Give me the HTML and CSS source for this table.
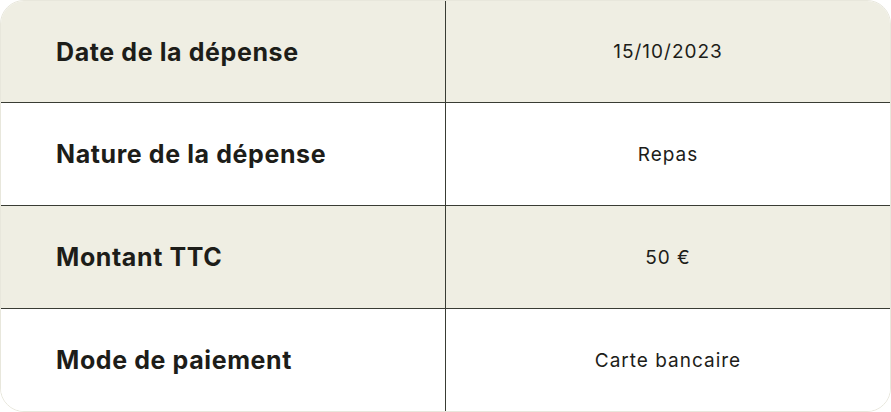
FILE: index.html
```html
<!DOCTYPE html>
<html lang="fr">
<head>
<meta charset="utf-8">
<link rel="stylesheet" href="styles.css">
</head>
<body>
<div class="table">
  <div class="row alt first">
    <div class="label">Date de la dépense</div>
    <div class="value">15/10/2023</div>
  </div>
  <div class="row">
    <div class="label">Nature de la dépense</div>
    <div class="value">Repas</div>
  </div>
  <div class="row alt">
    <div class="label">Montant TTC</div>
    <div class="value">50 €</div>
  </div>
  <div class="row last">
    <div class="label">Mode de paiement</div>
    <div class="value">Carte bancaire</div>
  </div>
</div>
</body>
</html>
```
FILE: styles.css
```css
* { box-sizing: border-box; }
html, body { margin: 0; padding: 0; background: #ffffff; }
body { font-family: Inter, "Noto Sans", sans-serif; color: #1d1d19; }
.table {
  width: 891px;
  height: 412px;
  border: 1px solid #e8e7dc;
  border-radius: 24px;
  overflow: hidden;
  display: flex;
  flex-direction: column;
}
.row {
  height: 103px;
  flex: none;
  display: grid;
  grid-template-columns: 444px 1fr;
  border-bottom: 1px solid #393c34;
  background: #ffffff;
}
.row.first { height: 102px; }
.row.alt { background: #efeee3; }
.row.last { border-bottom: none; flex: 1; height: auto; }
.label {
  display: flex;
  align-items: center;
  padding-left: 55px;
  font-weight: 700;
  font-size: 25px;
  letter-spacing: 0.6px;
}
.value {
  display: flex;
  align-items: center;
  justify-content: center;
  border-left: 1px solid #393c34;
  font-size: 19px;
  font-weight: 400;
  letter-spacing: 1px;
}
```
